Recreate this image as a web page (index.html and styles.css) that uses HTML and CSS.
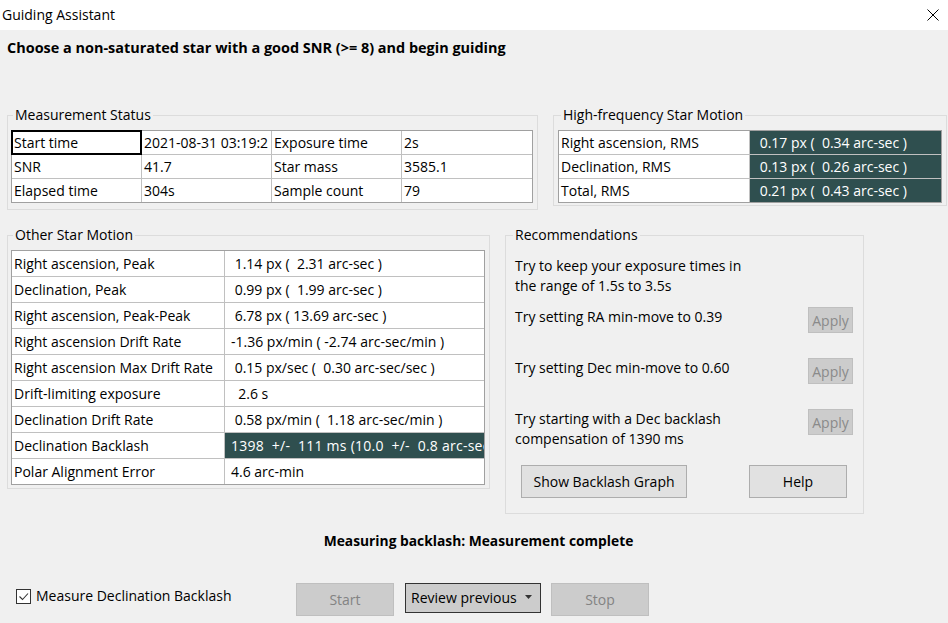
FILE: index.html
```html
<!DOCTYPE html>
<html lang="en">
<head>
<meta charset="utf-8">
<title>Guiding Assistant</title>
<link rel="stylesheet" href="styles.css">
</head>
<body>
<header class="titlebar">
  <span class="title">Guiding Assistant</span>
  <svg class="close" viewBox="0 0 12 12" aria-label="Close"><path d="M0.5 0.5 L11.5 11.5 M11.5 0.5 L0.5 11.5" stroke="#000" stroke-width="1" fill="none"/></svg>
</header>
<main class="content">
  <h1 class="instructions">Choose a non-saturated star with a good SNR (&gt;= 8) and begin guiding</h1>

  <div class="row row-top">
    <fieldset class="group group-status">
      <legend>Measurement Status</legend>
      <div class="grid grid-status">
        <div class="cell focus">Start time</div>
        <div class="cell">2021-08-31 03:19:2</div>
        <div class="cell">Exposure time</div>
        <div class="cell">2s</div>
        <div class="cell">SNR</div>
        <div class="cell">41.7</div>
        <div class="cell">Star mass</div>
        <div class="cell">3585.1</div>
        <div class="cell">Elapsed time</div>
        <div class="cell">304s</div>
        <div class="cell">Sample count</div>
        <div class="cell">79</div>
      </div>
    </fieldset>

    <fieldset class="group group-hf">
      <legend>High-frequency Star Motion</legend>
      <div class="grid grid-hf">
        <div class="cell">Right ascension, RMS</div>
        <div class="cell value dark"> 0.17 px (  0.34 arc-sec )</div>
        <div class="cell">Declination, RMS</div>
        <div class="cell value dark"> 0.13 px (  0.26 arc-sec )</div>
        <div class="cell">Total, RMS</div>
        <div class="cell value dark"> 0.21 px (  0.43 arc-sec )</div>
      </div>
    </fieldset>
  </div>

  <div class="row row-mid">
    <fieldset class="group group-other">
      <legend>Other Star Motion</legend>
      <div class="grid grid-other">
        <div class="cell">Right ascension, Peak</div>
        <div class="cell value"> 1.14 px (  2.31 arc-sec )</div>
        <div class="cell">Declination, Peak</div>
        <div class="cell value"> 0.99 px (  1.99 arc-sec )</div>
        <div class="cell">Right ascension, Peak-Peak</div>
        <div class="cell value"> 6.78 px ( 13.69 arc-sec )</div>
        <div class="cell">Right ascension Drift Rate</div>
        <div class="cell value">-1.36 px/min ( -2.74 arc-sec/min )</div>
        <div class="cell">Right ascension Max Drift Rate</div>
        <div class="cell value"> 0.15 px/sec (  0.30 arc-sec/sec )</div>
        <div class="cell">Drift-limiting exposure</div>
        <div class="cell value">  2.6 s</div>
        <div class="cell">Declination Drift Rate</div>
        <div class="cell value"> 0.58 px/min (  1.18 arc-sec/min )</div>
        <div class="cell">Declination Backlash</div>
        <div class="cell value dark wide">1398  +/-  111 ms (10.0  +/-  0.8 arc-sec )</div>
        <div class="cell">Polar Alignment Error</div>
        <div class="cell value">4.6 arc-min</div>
      </div>
    </fieldset>

    <fieldset class="group group-rec">
      <legend>Recommendations</legend>
      <div class="rec rec-exposure">
        <span class="rec-text">Try to keep your exposure times in<br>the range of 1.5s to 3.5s</span>
      </div>
      <div class="rec rec-gap">
        <span class="rec-text">Try setting RA min-move to 0.39</span>
        <button class="btn btn-apply" type="button">Apply</button>
      </div>
      <div class="rec rec-gap">
        <span class="rec-text">Try setting Dec min-move to 0.60</span>
        <button class="btn btn-apply" type="button">Apply</button>
      </div>
      <div class="rec rec-backlash">
        <span class="rec-text">Try starting with a Dec backlash<br>compensation of 1390 ms</span>
        <button class="btn btn-apply" type="button">Apply</button>
      </div>
      <div class="rec-actions">
        <button class="btn btn-normal btn-graph" type="button">Show Backlash Graph</button>
        <button class="btn btn-normal btn-help" type="button">Help</button>
      </div>
    </fieldset>
  </div>

  <p class="status">Measuring backlash: Measurement complete</p>

  <div class="row row-bottom">
    <label class="check-label">
      <span class="checkbox"><svg viewBox="0 0 13 13" class="check"><path d="M2.5 6.5 L5.5 9.5 L11 3.5" stroke="#333" stroke-width="1.1" fill="none"/></svg></span>
      <span>Measure Declination Backlash</span>
    </label>
    <button class="btn btn-disabled btn-start" type="button">Start</button>
    <button class="btn btn-review" type="button"><span>Review previous</span><svg class="caret" viewBox="0 0 7 4"><polygon points="0,0 7,0 3.5,4" fill="#333"/></svg></button>
    <button class="btn btn-disabled btn-stop" type="button">Stop</button>
  </div>
</main>
</body>
</html>
```

FILE: styles.css
```css
html, body {
  margin: 0;
  padding: 0;
}

body {
  width: 948px;
  height: 623px;
  overflow: hidden;
  background: #f0f0f0;
  color: #000;
  font-family: "Open Sans", "Noto Sans", sans-serif;
  font-size: 14px;
}

.titlebar {
  height: 30px;
  background: #fff;
  display: flex;
  align-items: center;
  justify-content: space-between;
  padding-left: 2px;
}

.title {
  line-height: 20px;
}

.close {
  width: 12px;
  height: 12px;
  margin-right: 9px;
  margin-top: -1px;
}

.content {
  padding-left: 7px;
}

.instructions {
  margin: 8px 0 0;
  font-size: 14.45px;
  font-weight: 700;
  line-height: 20px;
}

.row {
  display: flex;
  align-items: flex-start;
}

.row-top {
  margin-top: 49px;
  gap: 15px;
}

.row-mid {
  margin-top: 17px;
  gap: 15px;
}

.group {
  margin: 0;
  min-width: 0;
  box-sizing: border-box;
  border: 1px solid #dcdcdc;
}

.group legend {
  padding: 0 2px;
  margin-left: 2px;
  line-height: 16px;
}

.group-status {
  width: 531px;
  padding: 7px 4px 6px 3px;
}

.group-hf {
  width: 394px;
  padding: 7px 4px 2px 4px;
}

.group-hf legend {
  margin-left: 3px;
}

.group-other {
  width: 483px;
  padding: 7px 4px 3px 3px;
}

.group-rec {
  width: 359px;
  padding: 13px 10px 15px 9px;
}

.group-rec legend {
  margin-left: -2px;
}

.grid {
  display: grid;
  gap: 1px;
  background: #c0c0c0;
  border: 1px solid #a0a0a0;
}

.grid-status {
  grid-template-columns: 129px 129px 129px 130px;
  grid-auto-rows: 23px;
}

.grid-hf {
  grid-template-columns: 190px 191px;
  grid-auto-rows: 23px;
}

.grid-other {
  grid-template-columns: 212px 259px;
  grid-auto-rows: 25px;
}

.cell {
  background: #fff;
  display: flex;
  align-items: center;
  padding-left: 2px;
  padding-top: 1px;
  white-space: pre;
  overflow: hidden;
  line-height: 20px;
}

.cell.value {
  padding-left: 6px;
}

.cell.dark {
  background: #2f4f4f;
  color: #fff;
}

.cell.wide {
  letter-spacing: 0.25px;
}

.cell.focus {
  outline: 2px solid #000;
  outline-offset: -1px;
}

.rec {
  display: flex;
  justify-content: space-between;
  align-items: flex-start;
  line-height: 20px;
}

.rec-text {
  white-space: nowrap;
}

.rec-exposure {
  margin-bottom: 11px;
}

.rec-gap {
  margin-bottom: 25px;
}

.rec-backlash {
  margin-bottom: 16px;
}

.btn {
  font-family: inherit;
  font-size: 14px;
  box-sizing: border-box;
  padding: 0;
  margin: 0;
  flex: none;
}

.btn-apply {
  width: 45px;
  height: 26px;
  background: #cccccc;
  border: 1px solid #bfbfbf;
  color: #8a8a8a;
}

.rec-actions {
  display: flex;
  justify-content: space-between;
  padding: 0 6px;
}

.btn-normal {
  height: 33px;
  background: #e1e1e1;
  border: 1px solid #adadad;
  color: #000;
}

.btn-graph {
  width: 166px;
}

.btn-help {
  width: 98px;
}

.status {
  margin: 17px 0 0;
  font-size: 13.8px;
  font-weight: 700;
  line-height: 20px;
  text-align: center;
  padding-left: 2px;
}

.row-bottom {
  margin-top: 32px;
}

.check-label {
  flex: none;
  width: 280px;
  margin-left: 9px;
  margin-top: 3px;
  display: flex;
  align-items: center;
  gap: 5px;
  line-height: 20px;
}

.checkbox {
  width: 15px;
  height: 15px;
  box-sizing: border-box;
  border: 1px solid #333;
  background: #fff;
  display: flex;
}

.check {
  width: 13px;
  height: 13px;
}

.btn-disabled {
  background: #cccccc;
  border: 1px solid #bfbfbf;
  color: #838383;
}

.btn-start,
.btn-stop {
  width: 98px;
  height: 33px;
}

.btn-review {
  width: 136px;
  height: 30px;
  margin-left: 11px;
  background: #cccccc;
  border: 1px solid #333;
  color: #000;
  display: flex;
  align-items: center;
  padding: 0 8px 2px 5px;
}

.caret {
  width: 7px;
  height: 4px;
  margin-left: auto;
}

.btn-stop {
  margin-left: 10px;
}
```
